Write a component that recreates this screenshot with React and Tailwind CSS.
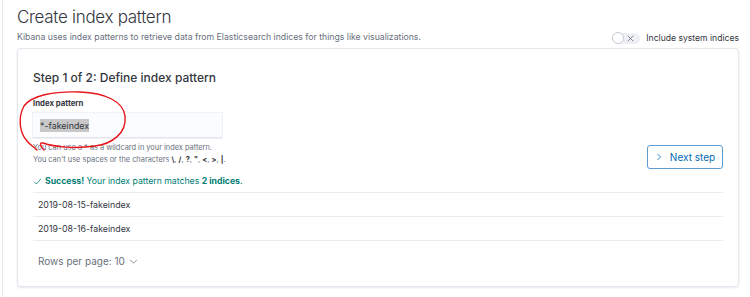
import React from "react";

function Check() {
  return (
    <svg width="9" height="9" viewBox="0 0 16 16" fill="none" stroke="#017d73" strokeWidth="1.4">
      <path d="M2 8.5l4 4 8-9" />
    </svg>
  );
}

function ChevronRight() {
  return (
    <svg width="8" height="8" viewBox="0 0 16 16" fill="none" stroke="#006bb4" strokeWidth="1.6">
      <path d="M5 2l6 6-6 6" />
    </svg>
  );
}

function ChevronDown() {
  return (
    <svg width="9" height="9" viewBox="0 0 16 16" fill="none" stroke="#69707d" strokeWidth="1.4">
      <path d="M2 5l6 6 6-6" />
    </svg>
  );
}

export default function App() {
  const sym = "font-bold text-[#343741]";
  return (
    <div
      className="relative w-[750px] h-[297px] overflow-hidden bg-white pl-[2px] text-[#343741]"
      style={{ fontFamily: "Inter, 'Noto Sans', sans-serif" }}
    >
      <div className="h-full border-l border-[#e4e8ef] pl-[14px] pr-[11px] pt-[5px]">
        <h1 className="text-[17px] leading-[24px] tracking-[-0.3px] font-light text-[#343741]">Create index pattern</h1>
        <div className="flex items-center justify-between">
          <p className="text-[8.7px] leading-[14px] text-[#69707d]">
            Kibana uses index patterns to retrieve data from Elasticsearch indices for things like visualizations.
          </p>
          <div className="flex items-center gap-[6px] mt-[2px]">
            <div className="relative w-[28px] h-[11px] rounded-full bg-[#eef0f3] flex items-center">
              <div className="absolute left-0 top-[-0.5px] w-[12px] h-[12px] rounded-full bg-white border border-[#c5cbd4]" />
              <svg className="absolute left-[15px] top-[2px]" width="7" height="7" viewBox="0 0 10 10" stroke="#69707d" strokeWidth="1.2">
                <path d="M1 1l8 8M9 1l-8 8" />
              </svg>
            </div>
            <span className="text-[8.6px] leading-[14px] text-[#343741]">Include system indices</span>
          </div>
        </div>

        <div className="mt-[3px] rounded-[4px] border border-[#e3e7ee] shadow-[0_1px_2px_rgba(152,162,179,0.25)] px-[15px] pt-[21px] pb-[18px]">
          <h2 className="text-[12px] leading-[16px] font-medium text-[#343741]">Step 1 of 2: Define index pattern</h2>

          <div className="flex justify-between mt-[11px]">
            <div>
              <label className="block text-[7.8px] leading-[12px] font-bold text-[#343741]">Index pattern</label>
              <div className="mt-[4px] w-[189px] h-[25px] bg-[#fbfcfd] border-b border-[#e0e5ee] shadow-[0_0_0_1px_rgba(15,39,118,0.06)] flex items-center pl-[7px]">
                <span className="text-[8.9px] leading-[13px] bg-[#c8c8c8] text-[#343741]">*-fakeindex</span>
              </div>
              <div className="mt-[4px] text-[7.4px] leading-[12px] text-[#69707d]">
                <div>You can use a * as a wildcard in your index pattern.</div>
                <div>
                  You can't use spaces or the characters <b className={sym}>\</b>, <b className={sym}>/</b>, <b className={sym}>?</b>, <b className={sym}>"</b>, <b className={sym}>&lt;</b>, <b className={sym}>&gt;</b>, <b className={sym}>|</b>.
                </div>
              </div>
            </div>
            <button className="self-start mt-[48px] w-[76px] h-[24px] rounded-[3px] border border-[#5e9bd0] flex items-center justify-center gap-[7px] text-[10px] text-[#006bb4]">
              <ChevronRight />
              <span>Next step</span>
            </button>
          </div>

          <div className="mt-[5px] flex items-center gap-[3px] text-[8.7px] leading-[14px] text-[#017d73]">
            <Check />
            <span>
              <b className="font-bold">Success!</b> Your index pattern matches <b className="font-bold">2 indices</b>.
            </span>
          </div>

          <div className="mt-[4px] border-t border-[#e8ebf0]">
            <div className="h-[24px] flex items-center pl-[5px] border-b border-[#e8ebf0] text-[8.8px] text-[#343741]">2019-08-15-fakeindex</div>
            <div className="h-[24px] flex items-center pl-[5px] border-b border-[#e8ebf0] text-[8.8px] text-[#343741]">2019-08-16-fakeindex</div>
          </div>

          <div className="mt-[13px] flex items-center gap-[4px] pl-[5px] text-[10px] leading-[14px] text-[#69707d]">
            <span>Rows per page: 10</span>
            <ChevronDown />
          </div>
        </div>
      </div>

      <svg className="absolute left-0 top-0 pointer-events-none" width="750" height="297">
        <path
          d="M37 150 C34 147 30 145 27 141 C19 132 18 117 24 106 C32 95 55 91 80 92 C105 93 123 101 125 116 C127 133 112 144 95 146 C75 149 55 147 43 143 C39 142 40 146 44 150"
          fill="none"
          stroke="#e8151b"
          strokeWidth="1.4"
          strokeLinecap="round"
        />
      </svg>
    </div>
  );
}
